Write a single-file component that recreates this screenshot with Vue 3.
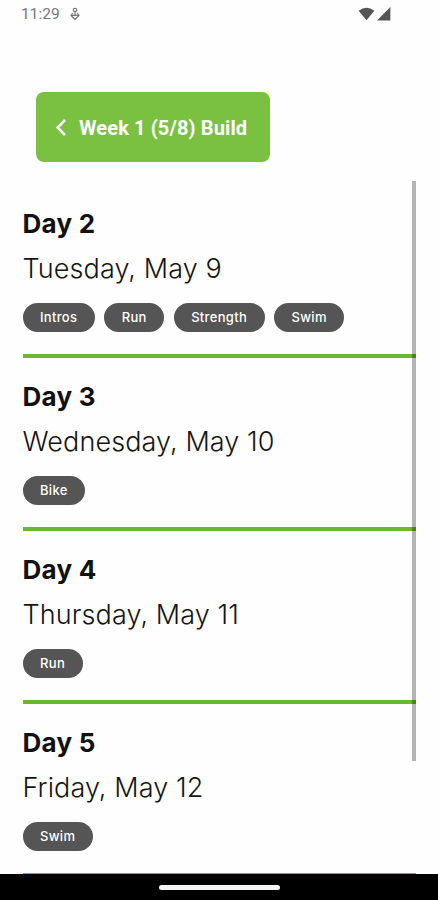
<script setup>
const days = [
  { title: 'Day 2', date: 'Tuesday, May 9', tags: ['Intros', 'Run', 'Strength', 'Swim'] },
  { title: 'Day 3', date: 'Wednesday, May 10', tags: ['Bike'] },
  { title: 'Day 4', date: 'Thursday, May 11', tags: ['Run'] },
  { title: 'Day 5', date: 'Friday, May 12', tags: ['Swim'] },
]
</script>

<template>
  <div class="screen">
    <header class="status">
      <span class="clock">11:29</span>
      <svg class="app-icon" viewBox="0 0 10 14" width="10" height="14">
        <circle cx="5" cy="3" r="1.7" />
        <path d="M5 4.5v4M2.8 6L1 8.5L5 12.3L9 8.5L7.2 6M1.5 8.2L5 8.5L8.5 8.2" />
      </svg>
      <svg class="signals" viewBox="0 0 34 16" width="34" height="16">
        <path d="M0.6 4.7Q8.5 -1.2 16.4 4.7L8.5 14.2Z" />
        <path d="M32.4 1V14.4H19Z" />
      </svg>
    </header>

    <button class="back" type="button">
      <svg viewBox="0 0 12 18" width="12" height="18">
        <path d="M10 1L2.5 8.5L10 16" />
      </svg>
      <span>Week 1 (5/8) Build</span>
    </button>

    <main class="list">
      <section v-for="day in days" :key="day.title" class="day">
        <h2>{{ day.title }}</h2>
        <p>{{ day.date }}</p>
        <div class="tags">
          <span v-for="tag in day.tags" :key="tag" class="tag">{{ tag }}</span>
        </div>
      </section>
      <div class="scrollbar"></div>
    </main>

    <footer class="nav"><div class="handle"></div></footer>
  </div>
</template>

<style>
body {
  margin: 0;
  background: #fefefe;
}
</style>

<style scoped>
.screen {
  width: 438px;
  height: 900px;
  display: flex;
  flex-direction: column;
  overflow: hidden;
  background: #fefefe;
  font-family: Inter, sans-serif;
}
.status {
  flex: none;
  height: 28px;
  display: flex;
  align-items: center;
  padding: 0 46px 0 21px;
  box-sizing: border-box;
}
.clock {
  width: 49px;
  font: 400 15.5px/28px Roboto, sans-serif;
  color: #777;
}
.app-icon {
  fill: none;
  stroke: #777;
  stroke-width: 1.2;
}
.signals {
  margin-left: auto;
  fill: #555;
}
.back {
  flex: none;
  align-self: flex-start;
  width: 233.5px;
  height: 69.5px;
  margin: 64px 0 0.5px 36px;
  padding: 2px 0 0 19px;
  box-sizing: border-box;
  border: 0;
  border-radius: 8px;
  background: #7ac142;
  color: #fff;
  display: flex;
  align-items: center;
  gap: 12px;
  white-space: nowrap;
  font: 700 20px/24px Roboto, sans-serif;
  letter-spacing: 0.12px;
}
.back svg {
  flex: none;
  fill: none;
  stroke: #fff;
  stroke-width: 2.6;
}
.list {
  position: relative;
  flex: 1;
  min-height: 0;
  overflow: hidden;
  padding: 23px 22px 0 22.5px;
}
.day {
  height: 173.1px;
  box-sizing: border-box;
  padding-top: 23px;
  border-bottom: 4px solid #6ab82d;
}
.day h2 {
  margin: 0;
  font-size: 26px;
  line-height: 32px;
  font-weight: 650;
  letter-spacing: 0.25px;
  color: #111;
}
.day p {
  margin: 12px 0 0;
  font-size: 27px;
  line-height: 34px;
  font-weight: 300;
  letter-spacing: 0.1px;
  font-feature-settings: "calt" 0;
  color: #151515;
}
.tags {
  display: flex;
  gap: 9.4px;
  margin-top: 16.6px;
}
.tag {
  height: 29px;
  box-sizing: border-box;
  padding: 0 17.5px;
  border-radius: 15px;
  background: #555;
  color: #fff;
  font-size: 13px;
  line-height: 29px;
  font-weight: 550;
  letter-spacing: 0.32px;
}
.scrollbar {
  position: absolute;
  top: 19px;
  right: 22px;
  width: 4px;
  height: 580px;
  background: rgba(0, 0, 0, 0.29);
}
.nav {
  flex: none;
  height: 26px;
  display: flex;
  justify-content: center;
  align-items: center;
  background: #000;
}
.handle {
  width: 121px;
  height: 5px;
  border-radius: 3px;
  background: #f4f4f4;
}
</style>
